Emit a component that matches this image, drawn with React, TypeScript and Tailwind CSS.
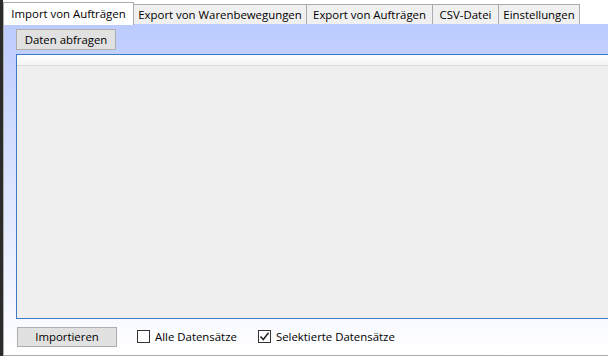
import React from 'react';

const tabs = [
  { label: 'Import von Aufträgen', w: 131 },
  { label: 'Export von Warenbewegungen', w: 173 },
  { label: 'Export von Aufträgen', w: 126 },
  { label: 'CSV-Datei', w: 66 },
  { label: 'Einstellungen', w: 81 },
];

function Checkbox({ checked }: { checked?: boolean }) {
  return (
    <span className="w-[13px] h-[13px] border border-[#333333] bg-white flex items-center justify-center shrink-0">
      {checked && (
        <svg width="11" height="11" viewBox="0 0 11 11">
          <path d="M1.5 5.5 L4.3 8.5 L9.5 1.8" stroke="#222" strokeWidth="1.5" fill="none" />
        </svg>
      )}
    </span>
  );
}

export default function App() {
  return (
    <div
      className="w-[608px] h-[356px] flex bg-white overflow-hidden text-[11.4px] text-black whitespace-nowrap"
      style={{ fontFamily: "'Open Sans', 'Noto Sans', sans-serif" }}
    >
      {/* dark desktop edge */}
      <div className="w-[3px] h-full bg-[#2b2b2b] shrink-0" />

      <div className="flex-1 flex flex-col">
        {/* Tab strip */}
        <div className="h-[24px] flex items-end shrink-0">
          {tabs.map((t, i) =>
            i === 0 ? (
              <div
                key={t.label}
                className="h-[23px] bg-white border border-b-0 border-[#acacac] flex items-center justify-center shrink-0 relative top-[1px]"
                style={{ width: t.w }}
              >
                {t.label}
              </div>
            ) : (
              <div
                key={t.label}
                className="h-[20px] bg-[#f0f0f0] border border-b-0 border-l-0 border-[#acacac] flex items-center justify-center shrink-0"
                style={{ width: t.w }}
              >
                {t.label}
              </div>
            )
          )}
        </div>

        {/* Panel */}
        <div className="flex-1 flex flex-col border-l border-b border-[#acacac] bg-gradient-to-b from-[#bccbff] to-white pl-[12px]">
          <div className="pt-[5px] pb-[4px]">
            <button className="w-[100px] h-[21px] bg-[#e1e1e1] border border-[#adadad] leading-none">
              Daten abfragen
            </button>
          </div>

          {/* Grid */}
          <div className="flex-1 border border-r-0 border-[#3f7bc1] bg-[#efefef] flex flex-col">
            <div className="h-[11px] bg-gradient-to-b from-white to-[#f4f4f4] border-b border-[#dcdcdc]" />
          </div>

          <div className="h-[36px] flex items-center">
            <button className="w-[100px] h-[20px] bg-[#e1e1e1] border border-[#adadad] leading-none ml-[1px]">
              Importieren
            </button>
            <div className="flex items-center gap-[5px] ml-[20px]">
              <Checkbox />
              <span>Alle Datensätze</span>
            </div>
            <div className="flex items-center gap-[5px] ml-[21px]">
              <Checkbox checked />
              <span>Selektierte Datensätze</span>
            </div>
          </div>
        </div>
      </div>
    </div>
  );
}
